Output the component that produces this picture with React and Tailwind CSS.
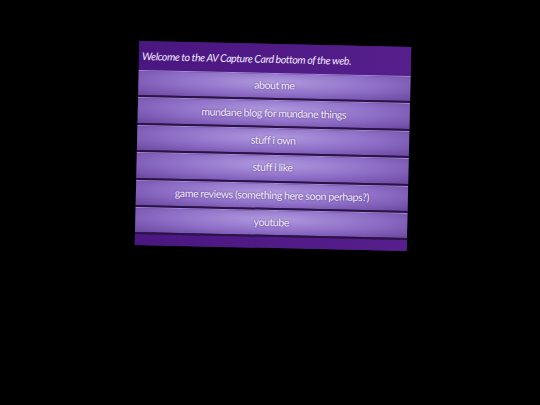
const links = [
  "about me",
  "mundane blog for mundane things",
  "stuff i own",
  "stuff i like",
  "game reviews (something here soon perhaps?)",
  "youtube",
];

export default function App() {
  return (
    <div className="min-h-[405px] w-[540px] bg-black pt-[44px]" style={{ fontFamily: "Lato, 'Open Sans', sans-serif" }}>
      <div className="ml-[137px] w-[272px] rotate-[1.3deg] bg-[#3d1566] shadow-[0_0_6px_rgba(0,0,0,0.8)]">
        <div className="flex h-[29px] items-center bg-gradient-to-r from-[#4a1680] to-[#561f8c] px-[3px] pt-[2px]">
          <span className="text-[10.5px] italic tracking-[-0.4px] text-[#f0e8ff]">
            Welcome to the AV Capture Card bottom of the web.
          </span>
        </div>
        <div className="flex flex-col">
          {links.map((l) => (
            <div
              key={l}
              className="flex h-[27.4px] items-center justify-center border-t border-t-[#a58ad4] border-b-2 border-b-[#2a1445] bg-[radial-gradient(ellipse_at_50%_35%,#b09ade_0%,#8d6dc6_55%,#6b479f_100%)] text-[10.5px] tracking-[-0.4px] text-[#f4efff] [text-shadow:0_0_2px_rgba(60,20,100,0.8)]"
            >
              {l}
            </div>
          ))}
        </div>
        <div className="h-[11px] bg-gradient-to-r from-[#4a1680] to-[#561f8c]" />
      </div>
    </div>
  );
}
